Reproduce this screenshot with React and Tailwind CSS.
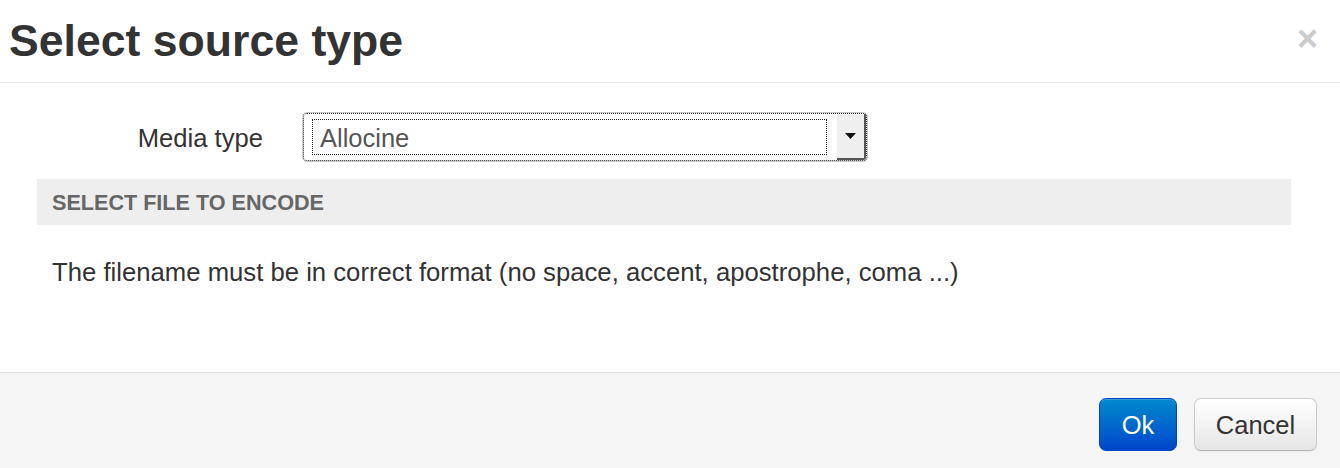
export default function App() {
  const font = { fontFamily: '"Liberation Sans", Arial, Helvetica, sans-serif' };
  return (
    <div className="w-[1340px] h-[468px] bg-white flex flex-col overflow-hidden text-[#333]" style={font}>
      {/* Header */}
      <div className="h-[83px] shrink-0 border-b border-[#e5e5e5] flex items-center justify-between pl-[9px] pr-[22px]">
        <h3 className="text-[44.6px] leading-[45px] font-bold text-[#333] -mt-[2px]">Select source type</h3>
        <span className="text-[36px] leading-[36px] font-bold text-[#cccccc] -mt-[4px]">×</span>
      </div>

      {/* Body */}
      <div className="flex-1 flex flex-col pt-[29px]">
        <div className="flex items-center h-[50px]">
          <div className="w-[263px] text-right text-[25.6px] leading-[36px] text-[#333] mt-[2px]">Media type</div>
          <div className="ml-[39px] w-[566px] h-[50px] rounded-[5px] border border-[#c8c8c8] bg-white flex">
            <div className="flex-1 flex border border-dotted border-[#222] rounded-[4px]">
              <div className="flex-1 pl-[8px] pr-[10px] py-[5px] flex">
                <div className="flex-1 border border-dotted border-[#222] flex items-center pl-[7px]">
                  <span className="text-[25.5px] leading-[30px] text-[#555] mt-[1px]">Allocine</span>
                </div>
              </div>
              <div className="w-[29px] bg-[#efefef] border-r-2 border-b-2 border-[#555] rounded-br-[3px] flex items-center justify-center">
                <svg width="11" height="6" viewBox="0 0 11 6">
                  <polygon points="0,0 11,0 5.5,6" fill="#111" />
                </svg>
              </div>
            </div>
          </div>
        </div>

        <div className="mt-[17px] mx-[37px] w-[1254px] h-[46px] bg-[#eeeeee] flex items-center pl-[15px]">
          <span className="text-[21.6px] leading-[26px] font-bold text-[#666] mt-[2px]">SELECT FILE TO ENCODE</span>
        </div>

        <p className="mt-[29px] pl-[52px] text-[25.7px] leading-[36px] text-[#333]">
          The filename must be in correct format (no space, accent, apostrophe, coma ...)
        </p>
      </div>

      {/* Footer */}
      <div className="h-[96px] shrink-0 border-t border-[#dddddd] bg-[#f5f5f5] flex items-start justify-end pt-[25px] pr-[23px] gap-[17px]">
        <button className="w-[78px] h-[53px] rounded-[7px] border border-[#0044cc] bg-gradient-to-b from-[#0088cc] to-[#0044cc] text-white text-[25.5px] leading-[30px] flex items-center justify-center shadow-[inset_0_1px_0_rgba(255,255,255,0.2)]" style={font}>
          Ok
        </button>
        <button className="w-[123px] h-[53px] rounded-[7px] border border-[#cccccc] border-b-[#b3b3b3] bg-gradient-to-b from-white to-[#e6e6e6] text-[#333] text-[25.5px] leading-[30px] flex items-center justify-center shadow-[0_1px_2px_rgba(0,0,0,0.05)]" style={font}>
          Cancel
        </button>
      </div>
    </div>
  );
}
